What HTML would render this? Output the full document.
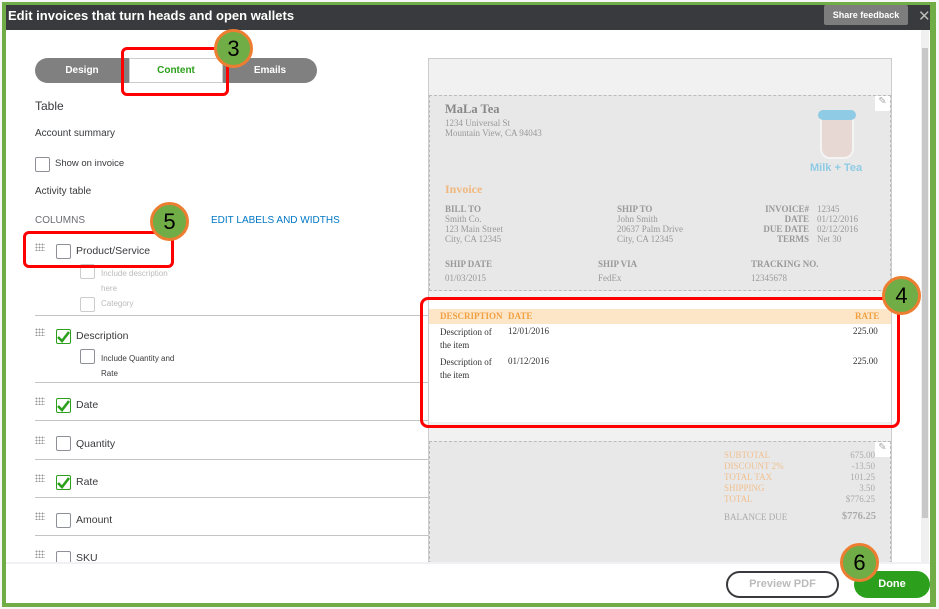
<!DOCTYPE html>
<html><head><meta charset="utf-8"><style>
*{box-sizing:border-box;margin:0;padding:0}
body{width:939px;height:609px;overflow:hidden;background:#fff;font-family:"Liberation Sans",sans-serif;position:relative}
.abs{position:absolute}
.serif{font-family:"Liberation Serif",serif}
.cb{position:absolute;width:15px;height:15px;border:1px solid #8d9096;border-radius:2px;background:#fff}
.cbs{position:absolute;width:15px;height:15px;border:1px solid #ccc;border-radius:2px;background:#fff}
.lbl{position:absolute;font-size:10px;color:#393a3d}
.hr{position:absolute;left:35px;width:393px;height:1px;background:#c4c4c4}
.grip{position:absolute;width:10px;height:8px;background-image:radial-gradient(circle,#999 0.8px,transparent 1px);background-size:3px 3px}
.circ{position:absolute;width:39px;height:39px;border-radius:50%;background:#70ad47;border:3px solid #ed7d31;font-size:22px;color:#000;text-align:center;line-height:33px}
.red{position:absolute;border:3px solid #f00;border-radius:6px}
.g{color:#999;font-size:9px}
.ck{position:absolute;width:15px;height:15px;border:1px solid #2ca01c;border-radius:2px;background:#fff}
.ck svg{position:absolute;left:-1px;top:-1px}
</style></head><body>
<div class="abs" style="left:0;top:0;width:939px;height:609px;background:#f6f7f6"></div>
<div class="abs" style="left:2px;top:2px;width:934px;height:605px;background:#70ad47"></div>
<div class="abs" style="left:6px;top:5px;width:924px;height:598px;background:#fff"></div>
<div class="abs" style="left:6px;top:5px;width:924px;height:25px;background:#393a3d"></div>
<div class="abs" style="left:8px;top:8px;font-size:13px;color:#fff;font-weight:bold">Edit invoices that turn heads and open wallets</div>
<div class="abs" style="left:824px;top:5px;width:84px;height:20px;background:#7d7d7d;border-radius:2px;color:#fff;font-size:9px;font-weight:bold;text-align:center;line-height:20px">Share feedback</div>
<div class="abs" style="left:918px;top:7px;color:#bbb;font-size:15px">✕</div>
<div class="abs" style="left:921px;top:30px;width:8px;height:532px;background:#f0f0f0"></div>
<div class="abs" style="left:922px;top:48px;width:6px;height:470px;background:#c8c8c8"></div>
<div class="abs" style="left:35px;top:58px;width:282px;height:25px;background:#808080;border-radius:13px"></div>
<div class="abs" style="left:35px;top:58px;width:94px;height:25px;color:#fff;font-size:10px;font-weight:bold;text-align:center;line-height:25px">Design</div>
<div class="abs" style="left:129px;top:58px;width:94px;height:25px;background:#fff;border:1px solid #ccc;color:#2ca01c;font-size:10px;font-weight:bold;text-align:center;line-height:23px">Content</div>
<div class="abs" style="left:223px;top:58px;width:94px;height:25px;color:#fff;font-size:10px;font-weight:bold;text-align:center;line-height:25px">Emails</div>
<div class="lbl" style="left:35px;top:99px;font-size:12px">Table</div>
<div class="lbl" style="left:35px;top:128px">Account summary</div>
<div class="cb" style="left:35px;top:157px"></div>
<div class="lbl" style="left:55px;top:158px;font-size:9.5px">Show on invoice</div>
<div class="lbl" style="left:35px;top:186px">Activity table</div>
<div class="lbl" style="left:35px;top:215px;color:#6b6c72">COLUMNS</div>
<div class="lbl" style="left:211px;top:215px;color:#0077c5">EDIT LABELS AND WIDTHS</div>

<div class="grip" style="left:35px;top:243px"></div>
<div class="cb" style="left:56px;top:244px"></div>
<div class="lbl" style="left:76px;top:245px;font-size:10.5px">Product/Service</div>
<div class="cbs" style="left:80px;top:264px"></div>
<div class="lbl" style="left:101px;top:266px;font-size:8px;color:#bbb;line-height:15px">Include description<br>here</div>
<div class="cbs" style="left:80px;top:297px"></div>
<div class="lbl" style="left:101px;top:299px;font-size:8px;color:#bbb">Category</div>
<div class="hr" style="top:315px"></div>

<div class="grip" style="left:35px;top:328px"></div>
<div class="ck" style="left:56px;top:329px"><svg width="15" height="15"><path d="M2 8 L6 12 L13 3" fill="none" stroke="#2ca01c" stroke-width="2.6"/></svg></div>
<div class="lbl" style="left:76px;top:330px;font-size:10.5px">Description</div>
<div class="cb" style="left:80px;top:349px"></div>
<div class="lbl" style="left:101px;top:351px;font-size:8px;line-height:15px">Include Quantity and<br>Rate</div>
<div class="hr" style="top:382px"></div>

<div class="grip" style="left:35px;top:397px"></div>
<div class="ck" style="left:56px;top:398px"><svg width="15" height="15"><path d="M2 8 L6 12 L13 3" fill="none" stroke="#2ca01c" stroke-width="2.6"/></svg></div>
<div class="lbl" style="left:76px;top:399px;font-size:10.5px">Date</div>
<div class="hr" style="top:420px"></div>

<div class="grip" style="left:35px;top:436px"></div>
<div class="cb" style="left:56px;top:436px"></div>
<div class="lbl" style="left:76px;top:438px;font-size:10.5px">Quantity</div>
<div class="hr" style="top:459px"></div>

<div class="grip" style="left:35px;top:474px"></div>
<div class="ck" style="left:56px;top:475px"><svg width="15" height="15"><path d="M2 8 L6 12 L13 3" fill="none" stroke="#2ca01c" stroke-width="2.6"/></svg></div>
<div class="lbl" style="left:76px;top:476px;font-size:10.5px">Rate</div>
<div class="hr" style="top:497px"></div>

<div class="grip" style="left:35px;top:512px"></div>
<div class="cb" style="left:56px;top:513px"></div>
<div class="lbl" style="left:76px;top:514px;font-size:10.5px">Amount</div>
<div class="hr" style="top:535px"></div>

<div class="grip" style="left:35px;top:550px"></div>
<div class="cb" style="left:56px;top:551px"></div>
<div class="lbl" style="left:76px;top:552px;font-size:10.5px">SKU</div>

<div class="abs" style="left:428px;top:58px;width:464px;height:506px;background:#f1f1f1;border:1px solid #ccc"></div>
<div class="abs" style="left:429px;top:95px;width:462px;height:196px;background:#e8e8e8;border:1px dashed #bbb"></div>
<div class="abs" style="left:875px;top:96px;width:15px;height:15px;background:#fff;color:#aaa;font-size:10px;text-align:center">✎</div>
<div class="abs serif" style="left:445px;top:102px;font-size:12.5px;font-weight:bold;color:#888">MaLa Tea</div>
<div class="abs serif g" style="left:445px;top:118px;line-height:10px">1234 Universal St<br>Mountain View, CA 94043</div>
<div class="abs" style="left:820px;top:111px;width:34px;height:48px;background:#e8d8d3;border-radius:4px 4px 10px 10px;border:2px solid #f4f4f4"></div>
<div class="abs" style="left:818px;top:110px;width:38px;height:10px;background:#8fcbe4;border-radius:8px"></div>
<div class="abs" style="left:810px;top:162px;font-size:11px;color:#8fcbe4;font-weight:bold">Milk + Tea</div>
<div class="abs serif" style="left:445px;top:182px;font-size:12px;font-weight:bold;color:#f0b87e">Invoice</div>
<div class="abs serif g" style="left:445px;top:204px;line-height:10px"><b>BILL TO</b><br>Smith Co.<br>123 Main Street<br>City, CA 12345</div>
<div class="abs serif g" style="left:617px;top:204px;line-height:10px"><b>SHIP TO</b><br>John Smith<br>20637 Palm Drive<br>City, CA 12345</div>
<div class="abs serif g" style="left:740px;top:204px;line-height:10px;text-align:right;width:69px"><b>INVOICE#<br>DATE<br>DUE DATE<br>TERMS</b></div>
<div class="abs serif g" style="left:817px;top:204px;line-height:10px">12345<br>01/12/2016<br>02/12/2016<br>Net 30</div>
<div class="abs serif g" style="left:445px;top:259px"><b>SHIP DATE</b></div>
<div class="abs serif g" style="left:445px;top:273px">01/03/2015</div>
<div class="abs serif g" style="left:598px;top:259px"><b>SHIP VIA</b></div>
<div class="abs serif g" style="left:598px;top:273px">FedEx</div>
<div class="abs serif g" style="left:751px;top:259px"><b>TRACKING NO.</b></div>
<div class="abs serif g" style="left:751px;top:273px">12345678</div>

<div class="abs" style="left:429px;top:300px;width:462px;height:122px;background:#fff"></div>
<div class="abs" style="left:429px;top:309px;width:462px;height:15px;background:#fde6c8"></div>
<div class="abs serif" style="left:440px;top:311px;font-size:9px;font-weight:bold;color:#f0a040">DESCRIPTION</div>
<div class="abs serif" style="left:508px;top:311px;font-size:9px;font-weight:bold;color:#f0a040">DATE</div>
<div class="abs serif" style="left:855px;top:311px;font-size:9px;font-weight:bold;color:#f0a040">RATE</div>
<div class="abs serif" style="left:440px;top:326px;font-size:9px;color:#333;line-height:13px">Description of<br>the item</div>
<div class="abs serif" style="left:508px;top:326px;font-size:9px;color:#333">12/01/2016</div>
<div class="abs serif" style="left:853px;top:326px;font-size:9px;color:#333">225.00</div>
<div class="abs serif" style="left:440px;top:356px;font-size:9px;color:#333;line-height:13px">Description of<br>the item</div>
<div class="abs serif" style="left:508px;top:356px;font-size:9px;color:#333">01/12/2016</div>
<div class="abs serif" style="left:853px;top:356px;font-size:9px;color:#333">225.00</div>

<div class="abs" style="left:429px;top:441px;width:462px;height:123px;background:#e8e8e8;border:1px dashed #bbb;border-bottom:none"></div>
<div class="abs" style="left:875px;top:442px;width:15px;height:15px;background:#fff;color:#aaa;font-size:10px;text-align:center">✎</div>
<div class="abs serif" style="left:724px;top:450px;font-size:9px;color:#f0c090;line-height:11px">SUBTOTAL<br>DISCOUNT 2%<br>TOTAL TAX<br>SHIPPING<br>TOTAL</div>
<div class="abs serif" style="left:815px;top:450px;width:60px;text-align:right;font-size:9px;color:#aaa;line-height:11px">675.00<br>-13.50<br>101.25<br>3.50<br>$776.25</div>
<div class="abs serif" style="left:724px;top:512px;font-size:9px;color:#aaa">BALANCE DUE</div>
<div class="abs serif" style="left:815px;top:511px;width:61px;text-align:right;font-size:10.5px;font-weight:bold;color:#aaa">$776.25</div>

<div class="abs" style="left:6px;top:562px;width:924px;height:41px;background:#fff;border-top:2px solid #f0f0f5"></div>
<div class="abs" style="left:726px;top:571px;width:113px;height:27px;border:2px solid #393a3d;border-radius:14px;color:#bbb;font-size:11px;font-weight:bold;text-align:center;line-height:23px">Preview PDF</div>
<div class="abs" style="left:854px;top:571px;width:76px;height:27px;background:#2ca01c;border-radius:14px;color:#fff;font-size:11px;font-weight:bold;text-align:center;line-height:27px">Done</div>

<div class="red" style="left:121px;top:47px;width:108px;height:49px"></div>
<div class="red" style="left:23px;top:231px;width:151px;height:37px"></div>
<div class="red" style="left:420px;top:297px;width:480px;height:131px;border-radius:8px"></div>
<div class="circ" style="left:214px;top:29px">3</div>
<div class="circ" style="left:150px;top:202px">5</div>
<div class="circ" style="left:882px;top:276px">4</div>
<div class="circ" style="left:840px;top:543px">6</div>
</body></html>
